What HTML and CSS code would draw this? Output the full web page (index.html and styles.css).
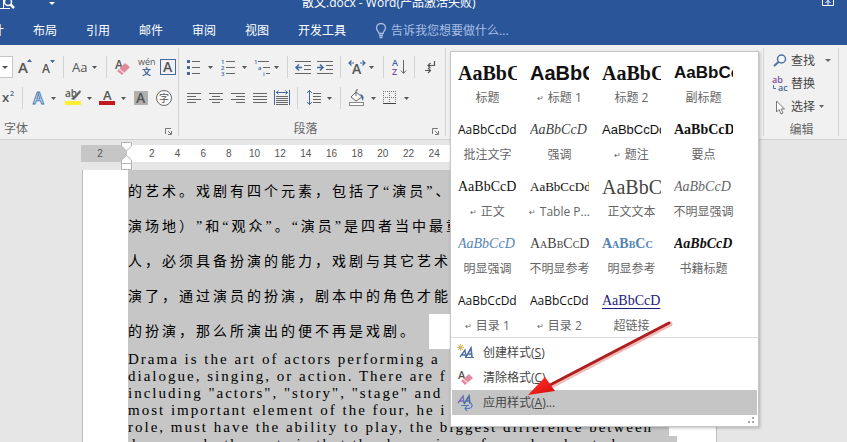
FILE: index.html
```html
<!DOCTYPE html>
<html lang="zh-CN">
<head>
<meta charset="utf-8">
<title>散文.docx - Word</title>
<link rel="stylesheet" href="styles.css">
</head>
<body>
<header class="top">
  <div class="titlebar">
    <button class="quick" aria-label="打印预览"><svg width="20" height="12" viewBox="0 0 20 12"><path d="M3.500 0V8.500H10M0 8.500H4" fill="none" stroke="#fff"/><circle cx="8" cy="2" r="3.500" fill="none" stroke="#fff" stroke-width="1.500"/><path d="M10.500 4.500L14 8" stroke="#fff" stroke-width="2.500"/></svg></button>
    <button class="quick" aria-label="自定义"><svg width="8" height="12" viewBox="0 0 8 12"><path d="M1 2H7L4 5Z" fill="#fff"/></svg></button>
    <h1>散文.docx - Word(产品激活失败)</h1>
    <button class="quick" aria-label="功能区显示选项"><svg width="14" height="12" viewBox="0 0 14 12"><path d="M1.500 0V5.500H12.500V0" fill="none" stroke="#fff"/><path d="M7 0V5M4.500 3L7 .5L9.500 3" fill="none" stroke="#fff"/></svg></button>
  </div>
  <nav class="tabs">
    <a href="#" class="first">计</a><a href="#">布局</a><a href="#">引用</a><a href="#">邮件</a><a href="#">审阅</a><a href="#">视图</a><a href="#">开发工具</a>
    <a href="#" class="tell"><svg width="12" height="16" viewBox="0 0 12 16"><path d="M4 10.500C4 8.500 1.500 7.500 1.500 5A4.500 4.500 0 0 1 10.500 5C10.500 7.500 8 8.500 8 10.500ZM4 12.500H8M4.500 14.500H7.500" fill="none" stroke="#a9bfe2" stroke-width="1.300"/></svg>告诉我您想要做什么...</a>
  </nav>
</header>

<section class="ribbon">
  <div class="group font-group">
    <div class="tools">
      <button class="size-box" aria-label="字号"><svg width="12" height="22" viewBox="0 0 12 22"><path d="M2 10H8L5 13Z" fill="#555"/></svg></button>
      <button class="t24" aria-label="增大字号"><svg width="18" height="20" viewBox="0 0 18 20"><text x="2" y="16" font-size="15" class="glyph">A</text><path d="M11 5L13.500 2L16 5Z" fill="#44689c"/></svg></button>
      <button class="t22" aria-label="减小字号"><svg width="18" height="20" viewBox="0 0 18 20"><text x="3" y="16" font-size="12" class="glyph">A</text><path d="M11 3H16L13.500 6Z" fill="#44689c"/></svg></button>
      <i class="sep"></i>
      <button class="t34" aria-label="更改大小写"><svg width="30" height="20" viewBox="0 0 30 20"><text x="2" y="15" font-size="13" class="thin">Aa</text><path d="M22 9H27L24.500 12Z" fill="#555"/></svg></button>
      <i class="sep"></i>
      <button class="t24" aria-label="清除格式"><svg width="18" height="20" viewBox="0 0 18 20"><text x="1" y="12" font-size="12" class="glyph">A</text><path d="M3 14L11 6L16 10L8 18Z" fill="#e08a9b"/><path d="M5 12L10 16" stroke="#f6d5db" stroke-width="1.500"/></svg></button>
      <button class="t22" aria-label="拼音指南"><svg width="20" height="20" viewBox="0 0 20 20"><text x="2" y="8" font-size="9" class="thin">wén</text><text x="6" y="18" font-size="9" class="blue">文</text></svg></button>
      <button class="t22" aria-label="字符边框"><svg width="18" height="20" viewBox="0 0 18 20"><rect x="1.500" y="2.500" width="15" height="15" fill="none" stroke="#44689c"/><text x="4" y="15" font-size="14" class="glyph">A</text></svg></button>
    </div>
    <div class="tools">
      <button class="t18" aria-label="上标"><svg width="18" height="20" viewBox="0 0 18 20"><text x="2" y="14" font-size="13" class="glyph">x</text><text x="10" y="8" font-size="7" class="blue">2</text></svg></button>
      <i class="sep"></i>
      <button class="t34" aria-label="文本效果"><svg width="28" height="20" viewBox="0 0 28 20"><text x="3" y="16" font-size="16" class="outline">A</text><path d="M21 9H26L23.500 12Z" fill="#555"/></svg></button>
      <button class="t34" aria-label="突出显示"><svg width="28" height="20" viewBox="0 0 28 20"><text x="1" y="9" font-size="10" class="glyph">ab</text><path d="M7 11L16 2L17 4L10 12Z" fill="#666"/><rect x="1" y="13" width="16" height="4" fill="#ffef2e"/><path d="M23 9H28L25.500 12Z" fill="#555"/></svg></button>
      <button class="t34" aria-label="字体颜色"><svg width="28" height="20" viewBox="0 0 28 20"><text x="5" y="12" font-size="13" class="glyph">A</text><rect x="1" y="13" width="16" height="4" fill="#c0191f"/><path d="M23 9H28L25.500 12Z" fill="#555"/></svg></button>
      <button class="t24" aria-label="字符底纹"><svg width="16" height="20" viewBox="0 0 16 20"><rect x="1" y="3" width="14" height="14" fill="#b0b0b0"/><text x="3" y="15" font-size="14" class="glyph">A</text></svg></button>
      <button class="t22" aria-label="带圈字符"><svg width="18" height="20" viewBox="0 0 18 20"><circle cx="9" cy="10" r="7.500" fill="#fafafa" stroke="#666"/><text x="4" y="14" font-size="10" class="thin">字</text></svg></button>
    </div>
    <div class="caption"><span>字体</span><button aria-label="字体设置"><svg width="9" height="9" viewBox="0 0 9 9"><path d="M1.500 7V1.500H7M4 4L7 7M7.500 4V7.500H4" fill="none" stroke="#777"/></svg></button></div>
  </div>

  <div class="group para-group">
    <div class="tools">
      <button class="t34" aria-label="项目符号"><svg width="28" height="20" viewBox="0 0 28 20"><g fill="#44689c"><rect x="1" y="3" width="3" height="3"/><rect x="1" y="9" width="3" height="3"/><rect x="1" y="15" width="3" height="3"/></g><path d="M6 4.500H14M6 10.500H14M6 16.500H14" stroke="#666"/><path d="M22 9H27L24.500 12Z" fill="#555"/></svg></button>
      <button class="t34" aria-label="编号"><svg width="28" height="20" viewBox="0 0 28 20"><g font-size="6" class="blue"><text x="1" y="7">1</text><text x="1" y="13">2</text><text x="1" y="19">3</text></g><path d="M6 4.500H15M6 10.500H15M6 16.500H15" stroke="#666"/><path d="M22 9H27L24.500 12Z" fill="#555"/></svg></button>
      <button class="t32" aria-label="多级列表"><svg width="28" height="20" viewBox="0 0 28 20"><g font-size="6" class="blue"><text x="1" y="7">1</text><text x="5" y="13">a</text><text x="10" y="19">i</text></g><path d="M5 4.500H16M10 10.500H17M13 16.500H17" stroke="#666"/><path d="M21 9H26L23.500 12Z" fill="#555"/></svg></button>
      <i class="sep"></i>
      <button class="t22" aria-label="减少缩进"><svg width="18" height="20" viewBox="0 0 18 20"><path d="M1 4.500H17M10 8.500H17M10 12.500H17M1 16.500H17" stroke="#666"/><path d="M8 10.500H2M5 7.500L2 10.500L5 13.500" fill="none" stroke="#44689c" stroke-width="1.500"/></svg></button>
      <button class="t22" aria-label="增加缩进"><svg width="18" height="20" viewBox="0 0 18 20"><path d="M1 4.500H17M10 8.500H17M10 12.500H17M1 16.500H17" stroke="#666"/><path d="M1 10.500H7M4 7.500L7 10.500L4 13.500" fill="none" stroke="#44689c" stroke-width="1.500"/></svg></button>
      <i class="sep"></i>
      <button class="t34" aria-label="中文版式"><svg width="28" height="20" viewBox="0 0 28 20"><text x="4" y="17" font-size="14" class="glyph">A</text><path d="M1 6H6M3.500 3.500L1 6L3.500 8.500M12 6H17M14.500 3.500L17 6L14.500 8.500" fill="none" stroke="#44689c" stroke-width="1.200"/><path d="M21 9H26L23.500 12Z" fill="#555"/></svg></button>
      <i class="sep"></i>
      <button class="t22" aria-label="排序"><svg width="16" height="20" viewBox="0 0 16 20"><text x="1" y="9" font-size="9" class="blue">A</text><text x="1" y="18" font-size="9" class="purple">Z</text><path d="M12.500 3V16M10 13.500L12.500 16.500L15 13.500" fill="none" stroke="#666"/></svg></button>
      <i class="sep"></i>
      <button class="t22" aria-label="显示编辑标记"><svg width="14" height="20" viewBox="0 0 14 20"><path d="M11.500 4V8.500H5M7.500 6L5 8.500L7.500 11M2 13.500H7M5 11L7.500 13.500L5 16" fill="none" stroke="#555" stroke-width="1.200"/></svg></button>
    </div>
    <div class="tools">
      <button class="t22" aria-label="左对齐"><svg width="16" height="20" viewBox="0 0 16 20"><path d="M1 5.500H15M1 8.500H10M1 11.500H15M1 14.500H10" stroke="#666"/></svg></button>
      <button class="t22" aria-label="居中"><svg width="16" height="20" viewBox="0 0 16 20"><path d="M1 5.500H15M4 8.500H12M1 11.500H15M4 14.500H12" stroke="#666"/></svg></button>
      <button class="t22" aria-label="右对齐"><svg width="16" height="20" viewBox="0 0 16 20"><path d="M1 5.500H15M6 8.500H15M1 11.500H15M6 14.500H15" stroke="#666"/></svg></button>
      <button class="t22" aria-label="两端对齐"><svg width="16" height="20" viewBox="0 0 16 20"><path d="M1 5.500H15M1 8.500H15M1 11.500H15M1 14.500H15" stroke="#666"/></svg></button>
      <button class="t22" aria-label="分散对齐"><svg width="18" height="20" viewBox="0 0 18 20"><path d="M1.500 2V17M16.500 2V17M3 4.500H15M5.500 2.500L3.500 4.500L5.500 6.500M12.500 2.500L14.500 4.500L12.500 6.500" fill="none" stroke="#44689c"/><path d="M3 8.500H15M3 10.500H15M3 12.500H15M3 14.500H15M3 16.500H15" stroke="#666"/></svg></button>
      <i class="sep"></i>
      <button class="t34" aria-label="行距"><svg width="26" height="20" viewBox="0 0 26 20"><path d="M3.500 2V17M1 5L3.500 2.500L6 5M1 14L3.500 16.500L6 14" fill="none" stroke="#44689c"/><path d="M7 5.500H15M7 8.500H15M7 11.500H15M7 14.500H15" stroke="#666"/><path d="M21 9H26L23.500 12Z" fill="#555"/></svg></button>
      <i class="sep"></i>
      <button class="t34" aria-label="底纹"><svg width="28" height="20" viewBox="0 0 28 20"><path d="M3 9L8 4L14 9L8 13Z" fill="#fafafa" stroke="#666"/><path d="M8 8V3Q8 1 10 2" fill="none" stroke="#666"/><path d="M12 6Q17 7 15 13Q13 11 14 9Z" fill="#44689c"/><rect x="1.500" y="14.500" width="14" height="3" fill="#fff" stroke="#888"/><path d="M23 9H28L25.500 12Z" fill="#555"/></svg></button>
      <button class="t34" aria-label="边框"><svg width="28" height="20" viewBox="0 0 28 20"><path d="M1.500 3V16M7.500 3V16M13.500 3V16M1 3.500H14M1 9.500H14" stroke="#777" stroke-dasharray="1 1"/><path d="M1 15.500H14" stroke="#444"/><path d="M22 9H27L24.500 12Z" fill="#555"/></svg></button>
    </div>
    <div class="caption centered"><span>段落</span><button aria-label="段落设置"><svg width="9" height="9" viewBox="0 0 9 9"><path d="M1.500 7V1.500H7M4 4L7 7M7.500 4V7.500H4" fill="none" stroke="#777"/></svg></button></div>
  </div>

  <div class="group styles-group">
    <div class="menu">
      <div class="gallery">
        <button><span class="pv serif bold big">AaBbC</span><span class="nm">标题</span></button>
        <button><span class="pv sans bold big">AaBbC</span><span class="nm"><small>↵</small> 标题 1</span></button>
        <button><span class="pv serif bold big">AaBbC</span><span class="nm">标题 2</span></button>
        <button><span class="pv sans bold mid">AaBbCc</span><span class="nm">副标题</span></button>
        <button><span class="pv ui">AaBbCcDd</span><span class="nm">批注文字</span></button>
        <button><span class="pv serif ital gray">AaBbCcD</span><span class="nm">强调</span></button>
        <button><span class="pv sans">AaBbCcDd</span><span class="nm"><small>↵</small> 题注</span></button>
        <button><span class="pv serif bold">AaBbCcD</span><span class="nm">要点</span></button>
        <button><span class="pv serif">AaBbCcD</span><span class="nm"><small>↵</small> 正文</span></button>
        <button><span class="pv serif small">AaBbCcDd</span><span class="nm"><small>↵</small> Table P...</span></button>
        <button><span class="pv serif big gray">AaBbC</span><span class="nm">正文文本</span></button>
        <button><span class="pv serif ital pale">AaBbCcD</span><span class="nm">不明显强调</span></button>
        <button><span class="pv serif ital azure">AaBbCcD</span><span class="nm">明显强调</span></button>
        <button><span class="pv serif caps gray">AaBbCcD</span><span class="nm">不明显参考</span></button>
        <button><span class="pv serif caps bold azure">AaBbCc</span><span class="nm">明显参考</span></button>
        <button><span class="pv serif bold ital">AaBbCcD</span><span class="nm">书籍标题</span></button>
        <button><span class="pv ui">AaBbCcDd</span><span class="nm"><small>↵</small> 目录 1</span></button>
        <button><span class="pv ui">AaBbCcDd</span><span class="nm"><small>↵</small> 目录 2</span></button>
        <button><span class="pv serif link">AaBbCcD</span><span class="nm">超链接</span></button>
      </div>
      <div class="commands">
        <button><svg width="18" height="18" viewBox="0 0 18 18"><path d="M3.500 0V7M0 3.500H7M1 1L6 6M6 1L1 6" stroke="#d9b65c"/><path d="M3 13L8 6L9 13M5 11H9" fill="none" stroke="#4c6fa5" stroke-width="1.400"/><path d="M9 13L14 4L15 13M11 10H15" fill="none" stroke="#4c6fa5" stroke-width="1.600"/><path d="M8 13.500H17" stroke="#4c6fa5"/></svg>创建样式(<u>S</u>)</button>
        <button><svg width="18" height="18" viewBox="0 0 18 18"><text x="1" y="10" font-size="11" class="glyph">A</text><path d="M4 12L12 5L16 9L8 16Z" fill="#e08a9b"/><path d="M6 10L11 14" stroke="#f6d5db" stroke-width="1.500"/></svg>清除格式(<u>C</u>)</button>
        <button class="active"><svg width="18" height="18" viewBox="0 0 18 18"><path d="M1 9L6 2L7 9M3 7H7" fill="none" stroke="#7a68b8" stroke-width="1.400"/><path d="M7 10L12 2L13 10M9 7H13" fill="none" stroke="#4c6fa5" stroke-width="1.600"/><path d="M4 11.500H12M14 9Q17 13 12 14.500H8M10 12L8 14.500L10 17" fill="none" stroke="#4c78c4" stroke-width="1.200"/></svg>应用样式(<u>A</u>)...</button>
      </div>
      <div class="grip"><svg width="8" height="8" viewBox="0 0 8 8"><path d="M5 1H7V3H5ZM1 5H3V7H1ZM5 5H7V7H5Z" fill="#aaa"/></svg></div>
      <svg class="arrow" width="160" height="90" viewBox="0 0 160 90">
        <defs><linearGradient id="head" x1="0" y1="0" x2="1" y2="1"><stop offset="0" stop-color="#ff3a30"/><stop offset="1" stop-color="#d90808"/></linearGradient></defs>
        <path d="M32 72L149 11" stroke="#e9a29c" stroke-width="5" stroke-linecap="round" opacity=".7"/>
        <path d="M29 72L148 10" stroke="#b01f1f" stroke-width="3" stroke-linecap="round"/>
        <path d="M7 82L24 64L29 71L34 78Z" fill="url(#head)"/>
      </svg>
    </div>
  </div>

  <div class="group edit-group">
    <button><svg width="14" height="16" viewBox="0 0 14 16"><circle cx="8.500" cy="6" r="4" fill="#f4f8fc" stroke="#4c6fa5" stroke-width="1.500"/><path d="M5.500 9L1 13" stroke="#4c6fa5" stroke-width="2"/></svg>查找<svg class="wide" width="8" height="8" viewBox="0 0 8 8"><path d="M1 2H7L4 5Z" fill="#666"/></svg></button>
    <button><svg width="16" height="16" viewBox="0 0 16 16"><text x="0" y="7" font-size="9" class="purple">ab</text><text x="6" y="15" font-size="9" class="blue">ac</text><path d="M1.500 9V12.500H4" fill="none" stroke="#4c6fa5"/></svg>替换</button>
    <button><svg width="14" height="16" viewBox="0 0 14 16"><path d="M3.500 2V13L6 10.500L8 15L10 14L8 10H11.500Z" fill="#fff" stroke="#777"/></svg>选择<svg width="8" height="8" viewBox="0 0 8 8"><path d="M1 2H6L3.500 5Z" fill="#666"/></svg></button>
    <div class="caption centered"><span>编辑</span></div>
  </div>
</section>

<main class="work">
  <div class="ruler">
    <div class="margin">2</div>
    <div class="scale"><span>2</span><span>4</span><span>6</span><span>8</span><span>10</span><span>12</span><span>14</span><span>16</span><span>18</span><span>20</span><span>22</span><span>24</span></div>
    <svg class="indent" width="12" height="28" viewBox="0 0 12 28"><path d="M.5 .5H10.500V4L5.500 9L.5 4ZM5.500 13.500L10.500 18V27.500H.5V18ZM.5 21.500H10.500" fill="#fff" stroke="#b4b4b4"/></svg>
  </div>
  <article class="page">
    <div class="zh">
      <p>的艺术。戏剧有四个元素，包括了“演员”、</p>
      <p>演场地）”和“观众”。“演员”是四者当中最重</p>
      <p>人，必须具备扮演的能力，戏剧与其它艺术</p>
      <p>演了，通过演员的扮演，剧本中的角色才能</p>
      <p class="last">的扮演，那么所演出的便不再是戏剧。</p>
    </div>
    <div class="en">
      <p>Drama is the art of actors performing a</p>
      <p>dialogue, singing, or action. There are f</p>
      <p>including "actors", "story", "stage" and</p>
      <p>most important element of the four, he i</p>
      <p>role, must have the ability to play, the biggest difference between</p>
      <p class="long">drama and other arts is that the drama is performed and acted</p>
    </div>
  </article>
</main>
</body>
</html>
```
FILE: styles.css
```css
* { box-sizing: border-box; }
body {
  margin: 0;
  height: 100vh;
  overflow: hidden;
  display: flex;
  flex-direction: column;
  background: #e6e6e6;
  color: #444;
  font: 12px/18px "Open Sans", "Noto Sans CJK SC", sans-serif;
}
button {
  border: 0;
  padding: 0;
  background: none;
  color: inherit;
  font: inherit;
  display: flex;
  align-items: center;
  justify-content: center;
}
svg { display: block; flex: none; }
h1, p { margin: 0; font-weight: normal; }

.glyph { fill: #555; font-family: "Open Sans", sans-serif; font-weight: 600; }
.thin { fill: #555; }
.blue { fill: #44689c; font-weight: 600; }
.purple { fill: #7d4f9e; font-weight: 600; }
.outline { fill: #fff; stroke: #4a7ab8; stroke-width: 1px; font-weight: 600; }

.top { background: #2a5699; color: #fff; flex: none; }
.titlebar { display: flex; align-items: flex-start; height: 15px; overflow: hidden; padding-right: 12px; }
.titlebar h1 { flex: 1; padding-left: 246px; font-size: 12px; line-height: 18px; margin-top: -6px; white-space: nowrap; }
.quick:nth-child(2) { margin-left: 28px; }
.tabs { display: flex; align-items: center; height: 30px; padding-top: 2px; gap: 29px; white-space: nowrap; }
.tabs a { color: #fff; text-decoration: none; }
.tabs .first { width: 4px; direction: rtl; overflow: hidden; }
.tabs .tell { display: flex; align-items: center; gap: 4px; color: #a9bfe2; }

.ribbon { display: flex; flex: none; height: 95px; background: #f1f1f1; border-bottom: 1px solid #d2d2d2; position: relative; z-index: 2; }
.group { position: relative; padding-top: 10px; display: flex; flex-direction: column; }
.group::after { content: ""; position: absolute; right: 0; top: 3px; bottom: 3px; width: 1px; background: #d4d4d4; }
.font-group { width: 179px; }
.para-group { width: 267px; padding-left: 4px; }
.styles-group { flex: 1; }
.edit-group { width: 75px; margin-right: 8px; padding-top: 4px; }
.tools { display: flex; height: 24px; align-items: center; margin-bottom: 7px; }
.sep { width: 1px; height: 22px; margin: 0 4px; background: #d4d4d4; }
.t18 { width: 18px; }
.t22 { width: 22px; }
.t24 { width: 24px; }
.t32 { width: 32px; }
.t34 { width: 34px; }
.size-box { width: 13px; height: 22px; background: #fff; border: 1px solid #c6c6c6; border-left: 0; }
.caption { display: flex; padding: 3px 4px 0; color: #666; }
.caption span { flex: 1; }
.centered { text-align: center; }
.centered:has(button) { padding-right: 4px; padding-left: 0; }
.caption button { width: 14px; padding-top: 4px; }
.edit-group > button { height: 23px; justify-content: flex-start; padding-left: 8px; gap: 3px; }
.edit-group > button svg:first-child { width: 16px; }
.edit-group .wide { margin-left: 6px; }
.edit-group .caption { padding-top: 3px; }

.menu {
  position: absolute;
  top: 6px;
  left: 4px;
  background: #fff;
  border: 1px solid #c6c6c6;
  box-shadow: 1px 1px 3px rgba(0, 0, 0, 0.25);
}
.gallery { display: grid; grid-template-columns: repeat(4, 59px); gap: 7px 13px; padding: 5px 25px 2px 7px; }
.gallery button { display: block; height: 50px; }
.pv { display: block; height: 32px; line-height: 32px; overflow: hidden; white-space: nowrap; text-align: left; color: #111; font-size: 14px; }
.nm { display: flex; justify-content: center; gap: 4px; white-space: nowrap; color: #666; line-height: 18px; }
.nm small { font: 8px/20px "DejaVu Sans", sans-serif; }
.serif { font-family: "Liberation Serif", serif; }
.sans { font-family: "Liberation Sans", sans-serif; font-size: 13px; }
.ui { font-family: "Open Sans", sans-serif; font-size: 12px; }
.small { font-size: 13px; }
.big { font-size: 20px; }
.mid { font-size: 17px; }
.bold { font-weight: bold; }
.ital { font-style: italic; }
.caps { font-variant: small-caps; }
.gray { color: #444; }
.pale { color: #666; }
.azure { color: #5484b4; }
.link { color: #1a1a80; text-decoration: underline; text-underline-offset: 3px; }
.commands { border-top: 1px solid #dcdcdc; padding: 2px 1px 0; }
.commands button { width: 100%; height: 25px; justify-content: flex-start; padding-left: 5px; white-space: nowrap; }
.commands svg { margin-right: 8px; }
.commands .active { background: #c5c5c5; }
.grip { height: 11px; display: flex; justify-content: flex-end; padding: 1px 3px; }
.arrow { position: absolute; left: 70px; top: 261px; }

.work { flex: 1; min-height: 0; padding: 5px 130px 0 81px; }
.ruler { position: relative; display: flex; height: 17px; margin-bottom: 8px; color: #555; font: 10px/17px "Liberation Sans", sans-serif; text-align: center; background: #fff; }
.margin { width: 46px; padding-right: 8px; background: #c6c6c6; }
.scale { display: grid; grid-template-columns: repeat(12, 1fr); width: 308px; margin-left: 12px; }
.indent { position: absolute; left: 40px; top: -3px; }
.page { margin-left: 1px; background: #fff; border: 1px solid #bdbdbd; border-width: 0 1px; padding-left: 45px; color: #000; white-space: nowrap; }
.page p { width: 541px; background: #c6c6c6; }
.zh { padding-top: 4px; background: linear-gradient(#c6c6c6, #c6c6c6) 0 0 / 541px 4px no-repeat; font: 14px/35px "Liberation Serif", "Noto Sans CJK SC", serif; letter-spacing: 3px; text-spacing-trim: space-all; }
.zh .last { width: 301px; }
.en { padding-top: 2px; background: linear-gradient(#c6c6c6, #c6c6c6) 0 0 / 541px 2px no-repeat; font: 15px/17px "Liberation Serif", serif; letter-spacing: 2px; }
.page .long { width: 549px; }
```
